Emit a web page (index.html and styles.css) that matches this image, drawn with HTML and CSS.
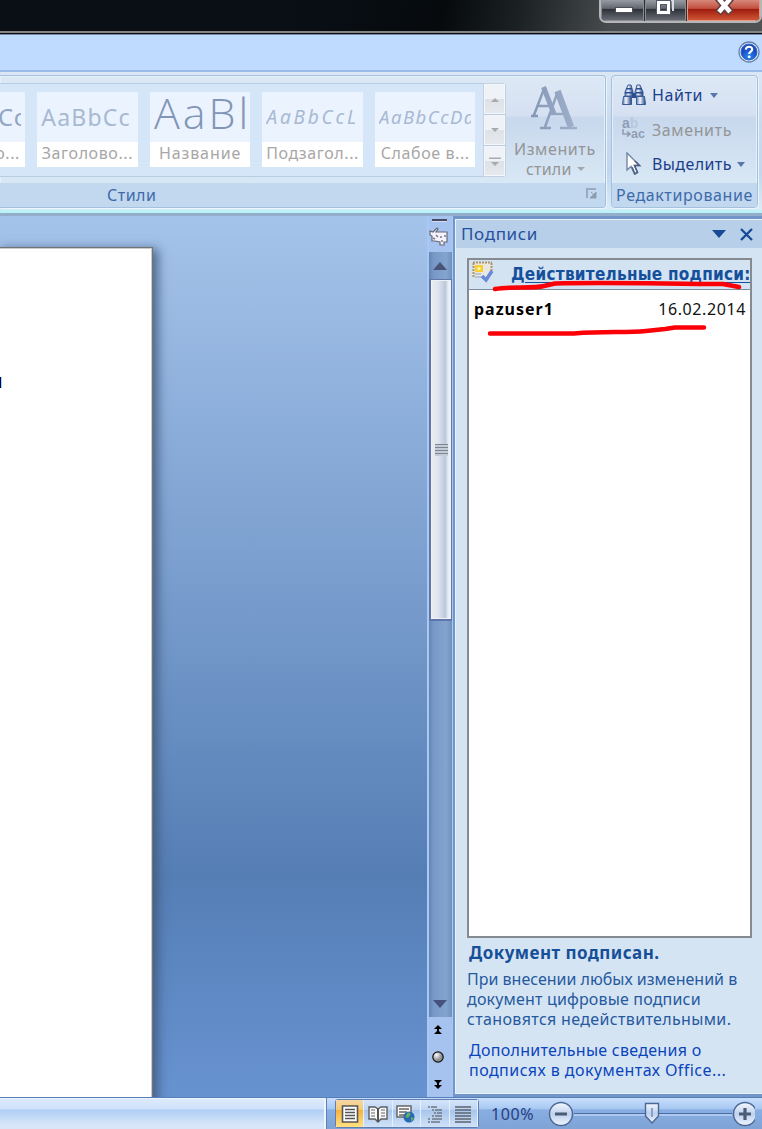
FILE: index.html
```html
<!DOCTYPE html>
<html lang="ru">
<head>
<meta charset="utf-8">
<title>Подписи</title>
<link rel="stylesheet" href="styles.css">
</head>
<body>
<div class="window">
  <header class="titlebar">
    <div class="controls">
      <span class="ctl min"><svg width="42" height="22"><rect x="13.500" y="7.500" width="17" height="5" fill="#fff" stroke="#4b4e58"/></svg></span>
      <span class="ctl max"><svg width="41" height="22"><path d="M18 0H27V11" fill="none" stroke="#d9dce2" stroke-width="2"/><path d="M12.500 2.500H22.500V12.500H12.500Z" fill="none" stroke="#555966" stroke-width="5"/><path d="M12.500 2.500H22.500V12.500H12.500Z" fill="none" stroke="#fff" stroke-width="3"/></svg></span>
      <span class="ctl close"><svg width="72" height="22"><path d="M30 -2L43 13M43 -2L30 13" stroke="#62403f" stroke-width="7.500"/><path d="M31 -1L42 12M42 -1L31 12" stroke="#fff" stroke-width="4.500"/></svg></span>
    </div>
  </header>
  <div class="tabstrip">
    <svg class="help" width="22" height="22" viewBox="0 0 22 22"><defs><radialGradient id="hg" cx=".5" cy=".8"><stop offset="0" stop-color="#2b8bf5"/><stop offset="1" stop-color="#174bc5"/></radialGradient></defs><circle cx="11" cy="11" r="10" fill="#e8f0fc" stroke="#6583b4" stroke-width="1.300"/><circle cx="11" cy="11" r="8" fill="url(#hg)" stroke="#3a63b5"/><path d="M7.800 8.600C8 4.800 14.200 4.900 14.200 8.400C14.200 10.700 11.200 10.500 11.200 13" fill="none" stroke="#fff" stroke-width="2.200"/><circle cx="11.200" cy="15.800" r="1.400" fill="#fff"/></svg>
  </div>
  <div class="ribbon">
    <section class="group styles">
      <div class="group-body">
        <div class="gallery">
          <div class="tile first"><div class="sample s0">Cc</div><div class="name n0">о...</div></div>
          <div class="tile"><div class="sample s1">AaBbCc</div><div class="name">Заголово...</div></div>
          <div class="tile"><div class="sample s2">AaBl</div><div class="name n2">Название</div></div>
          <div class="tile"><div class="sample s3">AaBbCcL</div><div class="name">Подзагол...</div></div>
          <div class="tile"><div class="sample s4">AaBbCcDd</div><div class="name">Слабое в...</div></div>
        </div>
        <div class="spin">
          <span><svg width="10" height="5"><path d="M1 5L5 1L9 5Z" fill="#a9aaae"/></svg></span>
          <span><svg width="10" height="5"><path d="M1 0H9L5 4Z" fill="#a9aaae"/></svg></span>
          <span><svg width="12" height="9"><path d="M0 .500H12V2H0ZM2 5H10L6 9Z" fill="#a9aaae"/></svg></span>
        </div>
        <div class="change">
          <svg width="48" height="44" viewBox="0 0 48 44"><defs><linearGradient id="ag" gradientUnits="userSpaceOnUse" x1="0" y1="0" x2="48" y2="0"><stop offset="0" stop-color="#8496b5"/><stop offset="1" stop-color="#a0b1cc"/></linearGradient></defs><g fill="none" stroke="url(#ag)"><path d="M4 29L14 3M1 30H8M8 20H19" stroke-width="2.500"/><path d="M13.500 1L24 28" stroke-width="5"/><path d="M15 41L27 8M10 42H21M19 28H34M30 42H47" stroke-width="2.500"/><path d="M27.500 5L41 41" stroke-width="6.500"/></g></svg>
          <div class="c1">Изменить</div>
          <div class="c2">стили <svg width="8" height="4"><path d="M0 0H8L4 4Z" fill="#a4a6aa"/></svg></div>
        </div>
      </div>
      <div class="group-label"><span class="lbl">Стили</span><svg class="launch" width="12" height="12"><path d="M1 10V1H10" fill="none" stroke="#8d9cb2" stroke-width="1.500"/><path d="M5 4L8 7M10 4V10H4Z" fill="#8d9cb2" stroke="#8d9cb2"/></svg></div>
    </section>
    <section class="group edit">
      <div class="group-body rows">
        <div class="row"><svg class="ri" width="24" height="22" viewBox="0 0 24 22"><defs><linearGradient id="bin"><stop offset="0" stop-color="#5f7fb4"/><stop offset=".4" stop-color="#f2f6fd"/><stop offset="1" stop-color="#1d3f82"/></linearGradient></defs><g fill="url(#bin)" stroke="#3a5a96"><path d="M6 1H9L11 8V12H3V8Z"/><path d="M15 1H18L21 8V12H13V8Z"/><path d="M1.500 12.500H9.500V20.500H.500Z"/><path d="M14.500 12.500H22.500L23.500 20.500H14.500Z"/></g><path d="M10 9H14V14H10ZM4 4H10V5.500H4ZM14 4H20V5.500H14ZM3 8H10V9.500H3ZM14 8H21V9.500H14Z" fill="#294f91"/></svg><span class="rt t1">Найти</span><svg width="8" height="5"><path d="M0 0H8L4 5Z" fill="#5577ab"/></svg></div>
        <div class="row off"><span class="ri rep"><span class="ra">a<i>b</i></span><span class="rb"><svg width="9" height="8"><path d="M1 0V5H7M5 2.500L8 5L5 7.500" fill="none" stroke="#919db3" stroke-width="1.600"/></svg>ac</span></span><span class="rt t2">Заменить</span></div>
        <div class="row"><svg class="ri cur" width="24" height="24" viewBox="0 0 24 24"><path d="M5 1V18L9 14.500L12.500 22L15.500 20.500L12.500 13.500H17.500Z" fill="#fff" stroke="#7385a3" stroke-width="1.400"/><path d="M10 15L13 22L15.500 20.500L12.500 13.500H17.500L13 9" fill="none" stroke="#4d6080" stroke-width="1.500"/></svg><span class="rt t3">Выделить</span><svg width="8" height="5"><path d="M0 0H8L4 5Z" fill="#5577ab"/></svg></div>
      </div>
      <div class="group-label el"><span>Редактирование</span></div>
    </section>
  </div>
  <main class="work">
    <div class="canvas"><div class="page"><span class="caret"></span></div></div>
    <div class="scroll">
      <div class="top"><i class="split"></i><svg width="20" height="20" viewBox="0 0 20 20"><path d="M1 4L4 5L8 1L9 2L7 5H18V15H15V18H11V15L6 14H3V9L1 8Z" fill="#f4f2fb" stroke="#666a7a" stroke-width="1.200"/><path d="M7 8L9 10M12 9V11M16 8V10M12 14H14M4 11L6 12" stroke="#777c8c" stroke-width="1.500"/></svg></div>
      <div class="track">
        <svg class="arr" width="16" height="8"><path d="M1 8L8 0L15 8Z" fill="#495377"/></svg>
        <div class="thumb"><i class="grip"></i></div>
        <svg class="arr dn" width="16" height="8"><path d="M1 0H15L8 8Z" fill="#46517c"/></svg>
      </div>
      <div class="nav">
        <svg width="10" height="12"><path d="M5 1L9 5H6V7L9 10H1L4 7V5H1Z" fill="#000"/></svg>
        <svg width="14" height="14"><defs><radialGradient id="bg" cx=".35" cy=".3"><stop offset="0" stop-color="#fff"/><stop offset="1" stop-color="#8f9094"/></radialGradient></defs><circle cx="7" cy="7" r="5.200" fill="url(#bg)" stroke="#111" stroke-width="1.200"/></svg>
        <svg width="10" height="12"><path d="M5 11L9 7H6V5L9 2H1L4 5V7H1Z" fill="#000"/></svg>
      </div>
    </div>
    <aside class="pane">
      <div class="pane-head"><span class="ptitle">Подписи</span><svg width="14" height="8"><path d="M0 0H14L7 8Z" fill="#164a94"/></svg><svg class="x" width="13" height="13"><path d="M1 1L12 12M12 1L1 12" stroke="#164a94" stroke-width="2.300"/></svg></div>
      <div class="list">
        <div class="list-head"><svg class="cert" width="22" height="22" viewBox="0 0 22 22"><path d="M1 1.500H20V16H1Z" fill="#e9e7e2"/><path d="M1 1.500H20M1.500 2V16M19.500 2V10" stroke="#ad9465" stroke-width="2" stroke-dasharray="2 1"/><path d="M3 4H11V11H3Z" fill="#f8cf31"/><circle cx="7" cy="7.500" r="1.600" fill="#fff6c0"/><path d="M3 13H9M3 16H10" stroke="#aab8ca" stroke-width="1.500"/><path d="M10 15L14 19L20 10" fill="none" stroke="#668bdc" stroke-width="3.500"/></svg><span class="valid">Действительные подписи:</span></div>
        <div class="signer"><b>pazuser1</b><span>16.02.2014</span></div>
        <svg class="marks" width="284" height="90" viewBox="467 258 284 90"><g fill="none" stroke="#fb0006" stroke-width="4.500" stroke-linecap="round" stroke-linejoin="round"><path d="M495 289C512 286 533 289 544 286L555 283.500C610 282 670 284 723 284L739 287"/><path d="M490 333.500H574C606 331 625 333 646 331L665 329L675 327.500H704"/></g></svg>
      </div>
      <h1>Документ подписан.</h1>
      <p class="warn"><span class="w1">При внесении любых изменений в</span><br><span class="w2">документ цифровые подписи</span><br><span class="w3">становятся недействительными.</span></p>
      <p class="more"><span class="m1">Дополнительные сведения о</span><br><span class="m2">подписях в документах Office...</span></p>
    </aside>
  </main>
  <footer class="status">
    <div class="info"></div>
    <div class="tools">
      <div class="views">
        <span class="on"><svg width="18" height="18"><path d="M1.500 1H16.500V17H1.500Z" fill="#fff" stroke="#555" stroke-width="1.600"/><path d="M4 4.500H14M4 7.500H14M4 10.500H14M4 13.500H14" stroke="#555" stroke-width="1.300"/></svg></span>
        <span><svg width="20" height="18"><path d="M1 2H7L10 4L13 2H19V14H13L10 17L7 14H1Z" fill="#f8f8f8" stroke="#5c5d60" stroke-width="1.400"/><path d="M3 5H7M3 8H7M3 11H7M13 5H17M13 8H17M13 11H17" stroke="#666"/><path d="M10 3V17" stroke="#555" stroke-width="2"/></svg></span>
        <span><svg width="20" height="18"><path d="M1 1H15V12H1Z" fill="#fff" stroke="#666" stroke-width="1.500"/><path d="M3 4H13M3 7H11M3 10H9" stroke="#666" stroke-width="1.300"/><circle cx="13" cy="12" r="5.500" fill="#2667b7"/><path d="M9 12L12 7L15 9L12 13ZM15 12L18 13L15 17Z" fill="#5fae62"/></svg></span>
        <span><svg width="16" height="18"><path d="M1 2H3M4 2H10M5 5H7M8 5H15M7 8H9M10 8H15M5 11H7M8 11H15M1 14H3M5 14H15M1 17H3M4 17H13" stroke="#727782" stroke-width="1.500"/></svg></span>
        <span><svg width="16" height="18"><path d="M0 2H16M0 5H16M0 8H16M0 11H16M0 14H16M0 17H16" stroke="#5e636d" stroke-width="1.300"/></svg></span>
      </div>
      <span class="pct">100%</span>
      <svg class="zoomctl" width="208" height="30" viewBox="0 0 208 30"><defs><linearGradient id="zg" x2="0" y2="1"><stop offset="0" stop-color="#f4f8ff"/><stop offset=".5" stop-color="#bfd1ec"/><stop offset="1" stop-color="#eff5ff"/></linearGradient></defs><path d="M27 14.500H185" stroke="#496da3" stroke-width="1.200"/><path d="M27 16H185" stroke="#d8e8ff" stroke-width="1.200"/><g fill="url(#zg)" stroke="#4b6794" stroke-width="1.400"><circle cx="14" cy="15" r="11.500"/><circle cx="198" cy="15" r="11.500"/><path d="M98.500 4.500H111.500V17L105 24L98.500 17Z"/></g><path d="M8 15H20M192 15H204M198 9V21" stroke="#4b5c76" stroke-width="3.200"/><path d="M105 9V18" stroke="#6e8fc3" stroke-width="1.500"/></svg>
    </div>
  </footer>
</div>
</body>
</html>
```
FILE: styles.css
```css
* { box-sizing: border-box; }
body { margin: 0; font-family: "Noto Sans", "Open Sans", sans-serif; }
svg { display: block; flex: none; }
.window { width: 762px; height: 1129px; overflow: hidden; display: flex; flex-direction: column; }

.titlebar { height: 35px; flex: none; background: linear-gradient(#0000 31px, #858585 31px 33px, #080b12 33px 34px, #7588a4 34px), linear-gradient(100deg, #0a0f16 0 38%, #060a0d 58%, #1c2124 68%, #474b4d 80%, #505354); display: flex; justify-content: flex-end; }
.controls { height: 23px; width: 163px; display: flex; border: 2px solid #b4b6b8; border-top: 0; border-radius: 0 0 7px 7px; overflow: hidden; background: #2b2e33; gap: 1px; }
.ctl { height: 21px; background: linear-gradient(#969ba4, #62666f 42%, #2e3138 46%, #666a72); border: 1px solid #888b91; border-top: 0; }
.min { width: 43px; }
.max { width: 41px; }
.close { width: 73px; background: linear-gradient(#d6887c, #c2503e 42%, #9e1b0d 46%, #ce5535); border-color: #e49a85; }

.tabstrip { height: 37px; flex: none; background: #bfdbff; border-bottom: 2px solid #9bbbe9; display: flex; justify-content: flex-end; padding: 6px 2px 0 0; }

.ribbon { height: 144px; flex: none; display: flex; gap: 5px; padding: 3px 3px 0 0; background: linear-gradient(#dbe7f5, #c9daee 35%, #c2d6ee 70%, #d8ecf8 96%, #bdf1f8 96% 98%, #93aecb 98%); }
.group { height: 133px; border: 1px solid #a6c1dd; border-radius: 4px; box-shadow: inset 0 0 0 1px #e5effa, 1px 1px 0 #e9f4fc; overflow: hidden; display: flex; flex-direction: column; background: linear-gradient(#dde8f5, #d5e1f2 30%, #c8d8ed 32%, #d9e8f5 82%); }
.styles { width: 606px; border-left: 0; border-radius: 0 4px 4px 0; }
.edit { width: 147px; }
.group-body { height: 107px; display: flex; flex: none; }
.group-label { height: 25px; background: #c1d8ef; color: #3e6aaa; font-size: 16px; line-height: 25px; display: flex; white-space: nowrap; }
.lbl { padding-left: 107px; width: 586px; letter-spacing: .5px; }
.launch { margin-top: 5px; }
.el { justify-content: center; letter-spacing: .6px; }

.gallery { width: 483px; height: 94px; margin-top: 7px; border: solid #b6cde6; border-width: 1px 0; background: #d4e6f8; display: flex; gap: 12.3px; padding-top: 8px; overflow: hidden; }
.tile { width: 100.3px; height: 75px; background: #fff; flex: none; overflow: hidden; }
.first { width: 25px; }
.sample { height: 50px; background: #ebf3ff; color: #a8b9d2; white-space: nowrap; overflow: hidden; line-height: 50px; border: solid #ebf3ff; border-width: 0 4px; }
.s0 { font-size: 24px; color: #93a6c5; letter-spacing: .5px; border-left-width: 0; text-indent: -2px; }
.s1 { font-size: 23px; letter-spacing: 1.2px; }
.s2 { font-family: "Open Sans", "Noto Sans", sans-serif; font-weight: 300; font-size: 43px; letter-spacing: 3px; line-height: 41px; color: #8295b6; }
.s3 { font-size: 19px; font-style: italic; letter-spacing: 2.8px; }
.s4 { font-size: 18.5px; font-style: italic; letter-spacing: 1.5px; }
.name { height: 25px; font-size: 16px; line-height: 23px; text-align: center; color: #a8a6a6; white-space: nowrap; letter-spacing: .6px; }
.n2 { letter-spacing: .9px; }
.n0 { display: flex; justify-content: flex-end; padding-right: 5px; }
.spin { width: 23px; height: 94px; margin-top: 7px; display: grid; grid-template-rows: repeat(3, 1fr); gap: 1px; background: #bccbdd; border: 1px solid #c3d1e0; border-radius: 0 3px 3px 0; }
.spin span { background: linear-gradient(#eff3f8 50%, #dde2e8 50%, #e6e9ed); display: grid; place-items: center; border: 1px solid #f3f7fa; }
.change { width: 99px; color: #949596; font-size: 16px; line-height: 20px; padding: 10px 0 0 8px; letter-spacing: .6px; }
.change > svg { margin-left: 16px; }
.c1 { margin-top: 9px; }
.c2 { display: flex; align-items: center; gap: 5px; padding-left: 12px; letter-spacing: .2px; }

.rows { flex-direction: column; padding: 2px 0 0 10px; }
.row { height: 34.5px; display: flex; align-items: center; color: #1b3f8b; font-size: 16px; }
.ri { width: 24px; margin-right: 6px; }
.rt { margin-right: 7px; letter-spacing: .6px; line-height: 20px; }
.t3 { margin-right: 5px; letter-spacing: .4px; }
.off { color: #949596; }
.rep { height: 23px; font: bold 14px/11px "Liberation Sans", sans-serif; color: #8f9db6; }
.rep i { font-style: normal; color: #bac7db; }
.ra { display: block; }
.rb { display: flex; line-height: 11px; font-size: 12.5px; }

.work { height: 881px; flex: none; display: flex; background: #7296c7; }
.canvas { width: 427px; overflow: hidden; background: linear-gradient(#a5c4ec 0, #a1c0e8 4%, #557eb5 75%, #6793d1); padding-top: 31px; }
.page { width: 153px; height: 860px; background: #fff; border: 1px solid #737373; border-left: 0; box-shadow: inset -1px 1px #cbcbcb, 3px 4px 10px 2px #40597cdd; padding-top: 129px; }
.caret { display: block; width: 2px; height: 11px; background: #00005e; border-right: 1px solid #99dfee; }
.scroll { width: 26px; background: #a6c3ef; border: solid #a9c9f4; border-width: 0 1px 0 2px; }
.top { height: 36px; padding-top: 3px; }
.split { display: block; height: 3px; width: 15px; margin: 0 0 5px 3px; background: #454963; border-bottom: 1px solid #d2dcef; }
.track { height: 765px; display: flex; flex-direction: column; background: linear-gradient(90deg, #6285b5, #7899c7 20%, #83a4cf 75%, #7191bd); }
.arr { margin: 10px 0 9px 3px; }
.thumb { height: 342px; border: 1px solid #6076a8; border-width: 1px 1px 2px 2px; background: linear-gradient(90deg, #eceeef, #dfe5ef 35%, #bbc8da 72%, #e6ebf4 85%, #f2f4f8); box-shadow: inset 0 0 0 1px #eef1f6; padding-top: 164px; }
.grip { display: block; width: 13px; height: 12px; margin-left: 4px; background: repeating-linear-gradient(#7f858f 0 1px, #c4ccd8 1px 3px); }
.dn { margin-top: auto; margin-bottom: 9px; }
.nav { height: 80px; display: flex; flex-direction: column; align-items: center; gap: 14px; padding: 7px 5px 0 0; }

.pane { width: 307px; height: 875px; margin: 3px 0 0 2px; background: #d5e4f2; border: 1px solid #e6f2ff; border-right: 0; }
.pane-head { height: 28px; background: #b8cfe9; display: flex; align-items: center; padding: 0 9px 0 5px; }
.ptitle { font-size: 17px; letter-spacing: .65px; color: #2650a0; width: 251px; line-height: 24px; }
.x { margin-left: 14px; }
.list { position: relative; width: 285px; height: 680px; margin: 10px 0 0 11px; background: #fff; border: 2px solid #868b91; overflow: hidden; }
.list-head { height: 30px; background: #d4e3f2; border-bottom: 1px solid #7d8da1; display: flex; padding: 1px 0 0 3px; }
.valid { font: bold 17px/27px "DejaVu Sans Condensed", "DejaVu Sans", sans-serif; font-stretch: condensed; letter-spacing: .25px; color: #15509c; text-decoration: underline; text-underline-offset: 2px; white-space: nowrap; margin-left: 17px; }
.signer { display: flex; justify-content: space-between; padding: 7px 4px 0 5px; font: 16px/24px "Noto Sans", sans-serif; letter-spacing: .6px; color: #111; }
.signer b { color: #000; letter-spacing: 1px; }
/* hand-drawn underlines laid over the list */
.marks { position: absolute; left: -2px; top: -2px; }
h1 { font: bold 17px/22px "Noto Sans", sans-serif; letter-spacing: .48px; margin: 4px 0 0 13px; color: #164f99; }
p { margin: 0 0 0 11px; font-size: 16px; line-height: 20px; color: #2559a0; white-space: nowrap; }
.w2 { letter-spacing: .17px; }
.w3 { letter-spacing: .35px; }
.warn { margin-top: 5px; }
.more { margin: 11px 0 0 13px; color: #0b45bd; }
.m1 { letter-spacing: .28px; }
.m2 { letter-spacing: .45px; }

.status { height: 32px; flex: none; display: flex; border-top: 1px solid #557eb6; background: linear-gradient(#c8defc, #a8c8f2 35%, #88aee3 38%, #7fa3d5); }
.info { width: 326px; border: 2px solid #edf5ff; border-width: 1px 2px 0 0; background: linear-gradient(#dceafc, #cfe1fa 34%, #afcef4 36%, #d7e6f9 85%); }
.tools { flex: 1; border-left: 1px solid #5b81b5; display: flex; align-items: center; }
.views { width: 144px; height: 29px; margin-left: 8px; border: 1px solid #607eb1; border-radius: 3px; background: linear-gradient(#d5e5fb, #bed5f2 35%, #a7c5eb 38%, #d0e2f8); display: grid; grid-template-columns: repeat(5, 1fr); }
.views span { display: grid; place-items: center; border-right: 1px solid #e4f0fe; }
.views .on { background: linear-gradient(#f4d8a5, #f6ca76 35%, #f6b13b 38%, #ffe282); }
.pct { width: 56px; flex: none; margin-left: 12px; font-size: 16px; letter-spacing: .6px; color: #263f84; }
```
